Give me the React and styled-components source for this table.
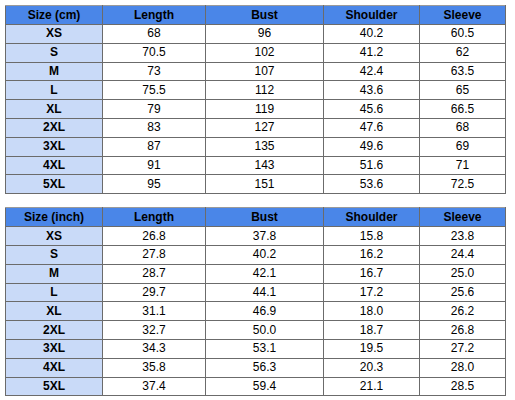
import React from "react";
import styled, { createGlobalStyle } from "styled-components";

const Global = createGlobalStyle`
  html, body { margin: 0; padding: 0; background: #ffffff; }
  body { font-family: "Liberation Sans", Arial, sans-serif; }
`;

const Page = styled.div`
  display: flex;
  flex-direction: column;
  gap: 13px;
  padding: 5px 0 0 5px;
  width: 500px;
`;

const Table = styled.table`
  width: 500px;
  table-layout: fixed;
  border-collapse: collapse;
  border: 1px solid #9a9a9a;
  font-size: 12px;
  color: #000;
`;

const HeadCell = styled.th`
  background: #4a86e8;
  font-weight: bold;
  height: 18px;
  padding: 0;
  text-align: center;
  border: 1px solid #6b6b6b;
  border-top-color: #9a9a9a;
  line-height: 18px;
`;

const Cell = styled.td`
  background: ${(p) => (p.$label ? "#c9daf8" : "#ffffff")};
  font-weight: ${(p) => (p.$label ? "bold" : "normal")};
  height: 17.8px;
  padding: 0;
  text-align: center;
  border: 1px solid #6b6b6b;
  line-height: 17px;
`;

const widths = [97, 103, 118, 96, 86];

const cm = [
  ["XS", "68", "96", "40.2", "60.5"],
  ["S", "70.5", "102", "41.2", "62"],
  ["M", "73", "107", "42.4", "63.5"],
  ["L", "75.5", "112", "43.6", "65"],
  ["XL", "79", "119", "45.6", "66.5"],
  ["2XL", "83", "127", "47.6", "68"],
  ["3XL", "87", "135", "49.6", "69"],
  ["4XL", "91", "143", "51.6", "71"],
  ["5XL", "95", "151", "53.6", "72.5"],
];

const inch = [
  ["XS", "26.8", "37.8", "15.8", "23.8"],
  ["S", "27.8", "40.2", "16.2", "24.4"],
  ["M", "28.7", "42.1", "16.7", "25.0"],
  ["L", "29.7", "44.1", "17.2", "25.6"],
  ["XL", "31.1", "46.9", "18.0", "26.2"],
  ["2XL", "32.7", "50.0", "18.7", "26.8"],
  ["3XL", "34.3", "53.1", "19.5", "27.2"],
  ["4XL", "35.8", "56.3", "20.3", "28.0"],
  ["5XL", "37.4", "59.4", "21.1", "28.5"],
];

function SizeTable({ unit, rows }) {
  const heads = [`Size (${unit})`, "Length", "Bust", "Shoulder", "Sleeve"];
  return (
    <Table>
      <colgroup>
        {widths.map((w, i) => (
          <col key={i} style={{ width: w }} />
        ))}
      </colgroup>
      <thead>
        <tr>
          {heads.map((h) => (
            <HeadCell key={h}>{h}</HeadCell>
          ))}
        </tr>
      </thead>
      <tbody>
        {rows.map((r) => (
          <tr key={r[0]}>
            {r.map((v, i) => (
              <Cell key={i} $label={i === 0}>
                {v}
              </Cell>
            ))}
          </tr>
        ))}
      </tbody>
    </Table>
  );
}

export default function App() {
  return (
    <>
      <Global />
      <Page>
        <SizeTable unit="cm" rows={cm} />
        <SizeTable unit="inch" rows={inch} />
      </Page>
    </>
  );
}
